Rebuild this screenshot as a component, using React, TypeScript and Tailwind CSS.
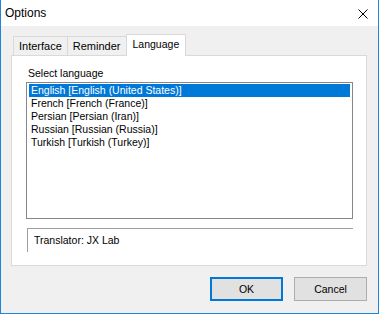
import { useState } from "react";

const languages = [
  "English [English (United States)]",
  "French [French (France)]",
  "Persian [Persian (Iran)]",
  "Russian [Russian (Russia)]",
  "Turkish [Turkish (Turkey)]",
];

const tabs = ["Interface", "Reminder", "Language"];

export default function App() {
  const [selected, setSelected] = useState(0);
  const [tab, setTab] = useState(2);

  return (
    <div
      className="w-[379px] h-[314px] flex flex-col bg-[#f0f0f0] border-x border-b border-[#1f86dc] text-black text-[10.5px] leading-[13px] select-none"
      style={{ fontFamily: '"Liberation Sans", Arial, sans-serif' }}
    >
      {/* Title bar */}
      <div className="h-[26px] bg-white flex items-center justify-between pl-[4px] pr-[10px] shrink-0">
        <span className="text-[12px]">Options</span>
        <svg width="10" height="10" viewBox="0 0 10 10" className="mt-[1px]">
          <path d="M0.5 0.5 L9.5 9.5 M9.5 0.5 L0.5 9.5" stroke="#000" strokeWidth="1" />
        </svg>
      </div>

      {/* Body */}
      <div className="flex-1 flex flex-col pl-[10px] pr-[11px] pt-[8px]">
        {/* Tabs */}
        <div className="flex items-end h-[21px] pl-[2px] relative z-10">
          {tabs.map((t, i) =>
            i === tab ? (
              <button
                key={t}
                onClick={() => setTab(i)}
                className="h-[22px] -mb-[1px] px-[6px] bg-white border border-b-0 border-[#d9d9d9] -ml-[1px] flex items-start pt-[3px]"
              >
                {t}
              </button>
            ) : (
              <button
                key={t}
                onClick={() => setTab(i)}
                className="h-[19px] px-[5px] text-[11px] bg-[#f0f0f0] border border-b-0 border-[#d9d9d9] -ml-[1px] first:ml-0 flex items-start pt-[3px]"
              >
                {t}
              </button>
            )
          )}
        </div>

        {/* Panel */}
        <div className="h-[211px] bg-white border border-[#d9d9d9] pt-[11px] pl-[14px] pr-[13px] flex flex-col">
          <div className="pl-[2px]">Select language</div>
          <div className="mt-[2px] h-[137px] border border-[#828790] px-[2px] py-[1px]">
            {languages.map((l, i) => (
              <div
                key={l}
                onClick={() => setSelected(i)}
                className={`h-[13px] pl-[2px] whitespace-nowrap ${
                  i === selected ? "bg-[#0078d7] text-white" : ""
                }`}
              >
                {l}
              </div>
            ))}
          </div>
          <div className="mt-[9px] ml-[1px] h-[24px] border-t border-l border-[#a0a0a0] flex items-center pl-[6px]">
            Translator: JX Lab
          </div>
        </div>

        {/* Buttons */}
        <div className="flex justify-end gap-[11px] mt-[11px]">
          <button className="w-[73px] h-[24px] bg-[#e1e1e1] border-2 border-[#0078d7]">OK</button>
          <button className="w-[73px] h-[24px] bg-[#e1e1e1] border border-[#adadad]">Cancel</button>
        </div>
      </div>
    </div>
  );
}
